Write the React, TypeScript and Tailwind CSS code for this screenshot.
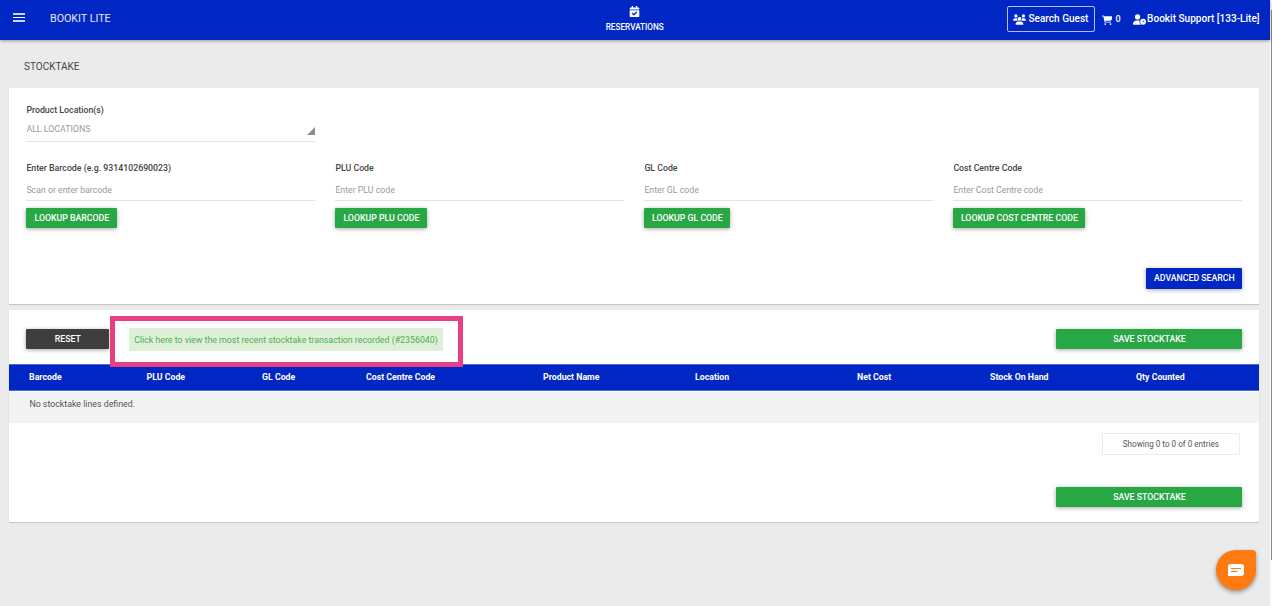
import { FaCalendarCheck } from "react-icons/fa";
import { FaCartShopping, FaUserClock, FaUsers } from "react-icons/fa6";
import type { ReactNode } from "react";

const lookups = [
  { label: "Enter Barcode (e.g. 9314102690023)", placeholder: "Scan or enter barcode", button: "LOOKUP BARCODE", width: "w-[91px]" },
  { label: "PLU Code", placeholder: "Enter PLU code", button: "LOOKUP PLU CODE", width: "w-[92px]" },
  { label: "GL Code", placeholder: "Enter GL code", button: "LOOKUP GL CODE", width: "w-[86px]" },
  { label: "Cost Centre Code", placeholder: "Enter Cost Centre code", button: "LOOKUP COST CENTRE CODE", width: "w-[132px]" },
];

const columns = [
  { name: "Barcode", width: "w-[117.5px]" },
  { name: "PLU Code", width: "w-[115.5px]" },
  { name: "GL Code", width: "w-[104px]" },
  { name: "Cost Centre Code", width: "w-[177px]" },
  { name: "Product Name", width: "w-[152px]" },
  { name: "Location", width: "w-[162px]" },
  { name: "Net Cost", width: "w-[133px]" },
  { name: "Stock On Hand", width: "w-[146px]" },
  { name: "Qty Counted", width: "w-[100px]" },
];

function Button({ className, children }: { className: string; children: ReactNode }) {
  return (
    <button
      className={`flex shrink-0 items-center justify-center whitespace-nowrap rounded-[1px] pt-px text-[8.75px] font-medium text-white shadow-[0_1px_4px_rgba(0,0,0,0.35)] ${className}`}
    >
      {children}
    </button>
  );
}

function Header() {
  return (
    <header className="z-10 grid h-10 shrink-0 grid-cols-[1fr_auto_1fr] bg-[#0027c4] text-white shadow-[0_1px_3px_rgba(0,0,0,0.35)]">
      <div className="flex items-start">
        <div className="mt-[13px] ml-[13px] flex w-3 flex-col">
          <span className="h-[2px] bg-white/80" />
          <span className="mt-[2px] h-px bg-white" />
          <span className="mt-[2px] h-[2px] bg-white/80" />
        </div>
        <span className="mt-[11px] ml-[25px] text-[10.7px] leading-4 text-white/90">BOOKIT LITE</span>
      </div>
      <div className="flex flex-col items-center pt-[6px]">
        <FaCalendarCheck size={11} />
        <span className="mt-1 text-[8.2px] leading-3 font-medium">RESERVATIONS</span>
      </div>
      <div className="flex items-start justify-end pr-[10px] text-[10.05px] font-medium">
        <div className="mt-[6px] flex h-[26px] w-[88px] items-center justify-center gap-[2px] rounded-[2px] border border-white/70 whitespace-nowrap">
          <FaUsers size={13} />
          <span>Search Guest</span>
        </div>
        <div className="mt-[13px] ml-[7px] flex h-[14px] items-center gap-[3px] text-[9px]">
          <FaCartShopping size={10.500} />
          <span>0</span>
        </div>
        <div className="mt-[11px] ml-3 flex h-4 items-center gap-[1.5px] whitespace-nowrap">
          <FaUserClock size={13} />
          <span>Bookit Support [133-Lite]</span>
        </div>
      </div>
    </header>
  );
}

function SearchPanel() {
  return (
    <section className="flex h-[215.5px] flex-col bg-white pr-[17px] pl-[17px] shadow-[0_1px_1px_rgba(0,0,0,0.15)]">
      <div className="w-[289px] pt-4">
        <div className="text-[8.75px] leading-3 font-medium text-[#444]">Product Location(s)</div>
        <div className="mt-[5px] flex h-[21px] justify-between border-b border-[#e3e3e3] text-[8.8px] leading-4 text-[#999]">
          <span>ALL LOCATIONS</span>
          <svg className="mt-[6px] h-2 w-2" viewBox="0 0 8 8">
            <path d="M8 0V8H0Z" fill="#8e8e8e" />
          </svg>
        </div>
      </div>
      <div className="mt-5 grid grid-cols-4 gap-x-5">
        {lookups.map((item) => (
          <div key={item.label}>
            <div className="text-[8.75px] leading-3 font-medium text-[#444]">{item.label}</div>
            <div className="mt-2 h-[19px] border-b border-[#e3e3e3] pt-px text-[8.75px] leading-[14px] text-[#999]">{item.placeholder}</div>
            <Button className={`mt-[7px] h-5 bg-[#28a745] ${item.width}`}>{item.button}</Button>
          </div>
        ))}
      </div>
      <div className="mt-10 flex justify-end">
        <Button className="h-[21px] w-24 bg-[#0027c4]">ADVANCED SEARCH</Button>
      </div>
    </section>
  );
}

function ResultsPanel() {
  return (
    <section className="mt-[6.5px] flex h-[212px] flex-col bg-white shadow-[0_1px_1px_rgba(0,0,0,0.15)]">
      <div className="flex h-[54px] items-start pr-[17px] pl-[17px]">
        <Button className="mt-[19px] h-5 w-[83px] bg-[#3e3e3e] pt-[2px]">RESET</Button>
        <div className="z-10 mt-[6px] ml-[0.6px] flex h-[51px] w-[353px] shrink-0 border-[5px] border-[#e83e84] pt-[7px] pl-[14px]">
          <a className="flex h-[23px] w-[314px] items-center justify-center rounded-[1px] bg-[#dff0d8] pt-[3px] text-[8.8px] whitespace-nowrap text-[#4caf50]">
            Click here to view the most recent stocktake transaction recorded (#2356040)
          </a>
        </div>
        <Button className="mt-[19px] ml-auto h-5 w-[186px] bg-[#28a745] pt-[2px]">SAVE STOCKTAKE</Button>
      </div>
      <div className="flex h-[27px] shrink-0 items-center border-y border-[#5068d4] bg-[#0027c4] pt-px pl-[19.7px] text-[8.75px] font-bold text-white">
        {columns.map((column) => (
          <div key={column.name} className={`shrink-0 ${column.width}`}>{column.name}</div>
        ))}
      </div>
      <div className="mt-px flex h-[31px] shrink-0 items-center bg-[#f3f3f3] pb-[5px] pl-[20px] text-[8.8px] text-[#555]">
        No stocktake lines defined.
      </div>
      <div className="mt-[10px] mr-[19.6px] flex h-[22px] w-[138px] shrink-0 items-center justify-center self-end border border-[#ececec] pt-px text-[8.15px] text-[#555]">
        Showing 0 to 0 of 0 entries
      </div>
      <div className="mt-8 flex justify-end pr-[17px]">
        <Button className="h-5 w-[186px] bg-[#28a745] pt-[2px]">SAVE STOCKTAKE</Button>
      </div>
    </section>
  );
}

export default function App() {
  return (
    <div className="flex h-[606px] w-[1272px] overflow-hidden bg-[#ebebeb] font-[Roboto,sans-serif]">
      <div className="relative flex w-[1269.5px] shrink-0 flex-col">
        <Header />
        <main className="flex flex-col pr-[10.1px] pl-[9.4px]">
          <h1 className="h-12 pt-[18.5px] pl-[14.6px] text-[10px] leading-4 text-[#444]">STOCKTAKE</h1>
          <SearchPanel />
          <ResultsPanel />
        </main>
        <div className="absolute right-[13.5px] bottom-[16.5px] flex h-10 w-10 items-center justify-center rounded-[20px] rounded-tr-[4px] bg-[#ff7b12] shadow-[0_2px_4px_rgba(0,0,0,0.4)]">
          <svg className="mt-px h-3 w-4" viewBox="0 0 16 12">
            <path d="M3 0H13A3 3 0 0 1 16 3V9A3 3 0 0 1 13 12H0V3A3 3 0 0 1 3 0Z" fill="white" />
            <path d="M3 4.500H13M3 7.500H9.500" stroke="#ff7b12" strokeWidth="1.2" />
          </svg>
        </div>
      </div>
      <div className="flex flex-1 flex-col items-end bg-[#fafafa]">
        <div className="mt-[10px] h-[550px] w-px bg-[#8a8a8a]" />
      </div>
    </div>
  );
}
